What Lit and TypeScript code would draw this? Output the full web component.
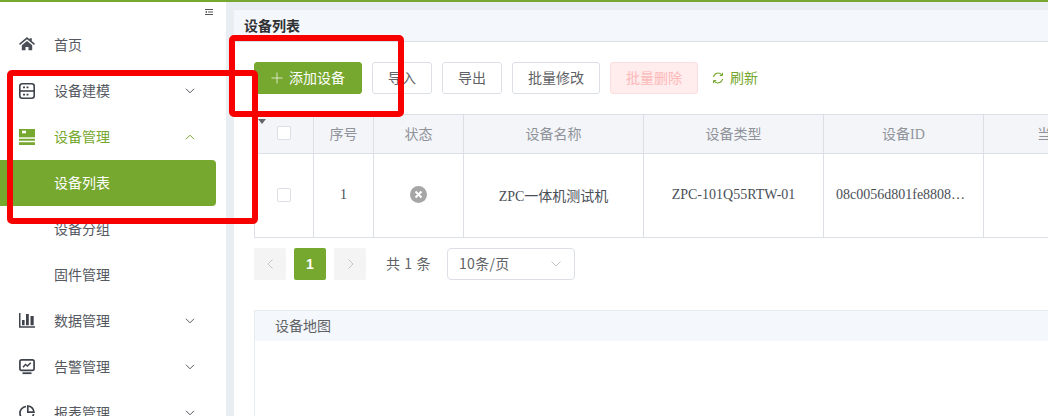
import { LitElement, html, css, svg } from "lit";
import { customElement } from "lit/decorators.js";

const down = html`<svg class="chev" width="10" height="6" viewBox="0 0 10 6"><path d="M1 .8 5 4.8 9 .8" fill="none" stroke="currentColor" stroke-width="1"/></svg>`;
const up = html`<svg class="chev" width="10" height="6" viewBox="0 0 10 6"><path d="M1 5.2 5 1.2 9 5.2" fill="none" stroke="currentColor" stroke-width="1"/></svg>`;

const icons: Record<string, unknown> = {
  home: svg`<path d="M8 0 0 6.800l1 1.200L8 2.200 15 8l1-1.200L12.800 4.100V1.300h-2.200v1Z" fill="#4a4f57"/><path d="M2.800 8.300 8 3.900l5.200 4.400v5H9.500V10H6.500v3.300H2.800Z" fill="#4a4f57"/>`,
  server: svg`<rect x="0.800" y="0.800" width="14.400" height="14.400" rx="2.500" fill="none" stroke="#3f444c" stroke-width="1.600"/><path d="M1 8h14" stroke="#3f444c" stroke-width="1.600"/><path d="M4 4.400h2M7.500 4.400h2M4 11.600h2M7.500 11.600h2" stroke="#3f444c" stroke-width="1.800"/>`,
  manage: svg`<path d="M0 0h16v8.300H0Z" fill="#76a72e"/><rect x="3" y="1.700" width="4" height="2.600" fill="#fff"/><path d="M0 9.700h16v2H0ZM0 13.300h16V16H0Z" fill="#76a72e"/>`,
  data: svg`<path d="M0 0h1.500v13.200H16v1.500H0Z" fill="#3f444c"/><path d="M3 7h2.600v5.200H3ZM7 1h2.800v11.200H7ZM11.500 3h3.200v9.200h-3.200Z" fill="#3f444c"/>`,
  alarm: svg`<rect x="0.900" y="0.900" width="14.200" height="10.400" rx="1.800" fill="none" stroke="#3f444c" stroke-width="1.700"/><path d="M4 8.300 6.500 5.500 8.500 7 11.800 3.800" fill="none" stroke="#3f444c" stroke-width="1.500"/><path d="M3.500 14.200h9" stroke="#3f444c" stroke-width="1.800"/>`,
  report: svg`<path d="M7 1.500a6.800 6.800 0 1 0 7.500 7.500" fill="none" stroke="#3f444c" stroke-width="1.700"/><path d="M8.800 1v6.200H15A6.500 6.500 0 0 0 8.800 1Z" fill="none" stroke="#3f444c" stroke-width="1.700"/>`,
};

@customElement("app-root")
export class AppRoot extends LitElement {
  static styles = css`
    :host { display: block; width: 1048px; height: 416px; overflow: hidden; position: relative; font-family: "Noto Sans CJK SC", "Noto Sans", sans-serif; font-size: 14px; color: #606266; background: #e9eef3; }
    .top { height: 2px; background: #76a72e; }
    .layout { display: flex; height: 414px; }
    .side { width: 226px; flex: none; background: #fff; padding-top: 20px; box-sizing: border-box; overflow: hidden; position: relative; }
    .collapse { position: absolute; left: 205px; top: 7px; }
    .item { height: 46px; display: flex; align-items: center; padding: 0 0 2px 19px; width: 216px; box-sizing: border-box; position: relative; color: #55595f; }
    .ic { width: 16px; height: 16px; margin: 2px 19px 0 0; flex: none; }
    .sub { padding-left: 54px; }
    .chev { position: absolute; left: 185px; top: 20px; color: #55595f; }
    .green { color: #76a72e; }
    .green .chev { color: #76a72e; }
    .active { background: #76a72e; color: #fff; border-radius: 0 4px 4px 0; }
    .main { flex: 1; min-width: 0; padding: 8px 0 0 8px; overflow: hidden; }
    .card { background: #fff; height: 420px; width: 830px; overflow: hidden; }
    .head { height: 31px; background: #f4f7fb; border-bottom: 1px solid #dcdfe6; padding-left: 10px; line-height: 31px; font-weight: 700; font-size: 14px; color: #303133; }
    .body { padding: 20px 0 0 20px; }
    .tools { display: flex; gap: 10px; height: 32px; align-items: stretch; }
    .btn { box-sizing: border-box; border: 1px solid #dcdfe6; border-radius: 3px; background: #fff; color: #606266; display: flex; align-items: center; justify-content: center; width: 60px; font-size: 14px; padding-bottom: 2px; }
    .wide { width: 88px; }
    .primary { width: 108px; background: #76a72e; border-color: #76a72e; color: #fff; gap: 6px; }
    .primary svg { margin-top: 2px; }
    .danger { background: #ffecec; border-color: #fddede; color: #fdb9b9; }
    .refresh { display: flex; align-items: center; gap: 6px; color: #76a72e; margin-left: 4px; padding-bottom: 2px; }
    .refresh svg { margin-top: 2px; }
    .table { margin-top: 20px; position: relative; width: 1000px; border-top: 1px solid #dcdfe6; border-bottom: 1px solid #dcdfe6; border-left: 1px solid #dcdfe6; box-sizing: border-box; }
    .row { display: grid; grid-template-columns: 59px 60px 90px 180px 180px 160px 163px; }
    .hd { height: 39px; background: #f3f5f9; color: #909399; border-bottom: 1px solid #dcdfe6; box-sizing: border-box; }
    .bd { height: 83px; color: #4a4f57; font-family: "Liberation Serif", "Noto Sans CJK SC", serif; font-size: 14px; }
    .hd > div, .bd > div { border-right: 1px solid #dcdfe6; display: flex; align-items: center; justify-content: center; box-sizing: border-box; padding-bottom: 2px; }
    .hd > div { font-family: "Liberation Serif", "Noto Sans CJK SC", serif; font-size: 14px; }
    .bd .ell { justify-content: flex-start; padding-left: 12px; }
    .check { width: 14px; height: 14px; box-sizing: border-box; border: 1px solid #dcdfe6; border-radius: 2px; background: #fff; }
    .tri { position: absolute; left: 3px; top: 4px; width: 0; height: 0; border-left: 4px solid transparent; border-right: 4px solid transparent; border-top: 5px solid #666; }
    .pager { display: flex; align-items: center; margin-top: 10px; height: 32px; }
    .pg { width: 32px; height: 32px; border-radius: 2px; background: #f4f4f5; display: flex; align-items: center; justify-content: center; margin-right: 8px; color: #c0c4cc; }
    .cur { background: #76a72e; color: #fff; font-weight: 700; font-family: "Liberation Sans", sans-serif; }
    .total { margin: 0 16px 0 12px; color: #606266; letter-spacing: .6px; padding-bottom: 2px; }
    .sel { width: 128px; height: 32px; box-sizing: border-box; border: 1px solid #dcdfe6; border-radius: 4px; display: flex; align-items: center; justify-content: space-between; padding: 0 13px 2px 11px; color: #606266; letter-spacing: .3px; }
    .sel svg { margin-top: 2px; }
    .map { margin-top: 30px; border-left: 1px solid #e4ebf1; border-top: 1px solid #e4ebf1; height: 120px; }
    .maphead { height: 30px; background: #f4f7fb; padding-left: 20px; line-height: 28px; font-size: 14px; color: #606266; }
    .mark { position: absolute; box-sizing: border-box; border: 6px solid #f80000; border-radius: 5px; }
    .m1 { left: 229px; top: 35px; width: 175px; height: 82px; }
    .m2 { left: 7px; top: 70px; width: 251px; height: 154px; }
  `;

  private icon(n: string) {
    return html`<svg class="ic" viewBox="0 0 16 16">${icons[n]}</svg>`;
  }

  private chevH(d: string) {
    return html`<svg width="7" height="12" viewBox="0 0 7 12"><path d="${d}" fill="none" stroke="#c0c4cc" stroke-width="1"/></svg>`;
  }

  render() {
    return html`
      <div class="top"></div>
      <div class="layout">
        <nav class="side">
          <svg class="collapse" width="8" height="6" viewBox="0 0 8 6"><path d="M0 .5h8M3 3h5M0 5.500h8" stroke="#555" stroke-width="1"/><path d="M0 3 2 1.800v2.400Z" fill="#555"/></svg>
          <div class="item">${this.icon("home")}首页</div>
          <div class="item">${this.icon("server")}设备建模${down}</div>
          <div class="item green">${this.icon("manage")}设备管理${up}</div>
          <div class="item sub active">设备列表</div>
          <div class="item sub">设备分组</div>
          <div class="item sub">固件管理</div>
          <div class="item">${this.icon("data")}数据管理${down}</div>
          <div class="item">${this.icon("alarm")}告警管理${down}</div>
          <div class="item">${this.icon("report")}报表管理${down}</div>
        </nav>
        <main class="main">
          <div class="card">
            <div class="head">设备列表</div>
            <div class="body">
              <div class="tools">
                <div class="btn primary"><svg width="12" height="12" viewBox="0 0 12 12"><path d="M6 .5v11M.5 6h11" stroke="#d9e7c4" stroke-width="1"/></svg>添加设备</div>
                <div class="btn">导入</div>
                <div class="btn">导出</div>
                <div class="btn wide">批量修改</div>
                <div class="btn wide danger">批量删除</div>
                <div class="refresh"><svg width="12" height="12" viewBox="0 0 12 12"><path d="M1.500 5A4.600 4.600 0 0 1 9.800 3M10.500 7A4.600 4.600 0 0 1 2.200 9" fill="none" stroke="#76a72e" stroke-width="1.100"/><path d="M10.500 .8V3.500H7.800M1.500 11.200V8.500H4.200" fill="none" stroke="#76a72e" stroke-width="1"/></svg>刷新</div>
              </div>
              <div class="table">
                <div class="tri"></div>
                <div class="row hd">
                  <div><span class="check"></span></div><div>序号</div><div>状态</div><div>设备名称</div><div>设备类型</div><div>设备ID</div><div>当前版本</div>
                </div>
                <div class="row bd">
                  <div><span class="check"></span></div>
                  <div>1</div>
                  <div><svg width="17" height="17" viewBox="0 0 17 17"><circle cx="8.500" cy="8.500" r="8.500" fill="#a6a6a6"/><path d="M5.500 5.500l6 6M11.500 5.500l-6 6" stroke="#fff" stroke-width="2"/></svg></div>
                  <div>ZPC一体机测试机</div>
                  <div>ZPC-101Q55RTW-01</div>
                  <div class="ell">08c0056d801fe8808…</div>
                  <div></div>
                </div>
              </div>
              <div class="pager">
                <div class="pg">${this.chevH("M5.500 1.500 1 6l4.500 4.500")}</div>
                <div class="pg cur">1</div>
                <div class="pg">${this.chevH("M1.500 1.500 6 6l-4.500 4.500")}</div>
                <div class="total">共 1 条</div>
                <div class="sel">10条/页<svg width="10" height="6" viewBox="0 0 10 6"><path d="M.5.500 5 5 9.500.5" fill="none" stroke="#c0c4cc" stroke-width="1"/></svg></div>
              </div>
              <div class="map"><div class="maphead">设备地图</div></div>
            </div>
          </div>
        </main>
      </div>
      <div class="mark m1"></div>
      <div class="mark m2"></div>
    `;
  }
}
